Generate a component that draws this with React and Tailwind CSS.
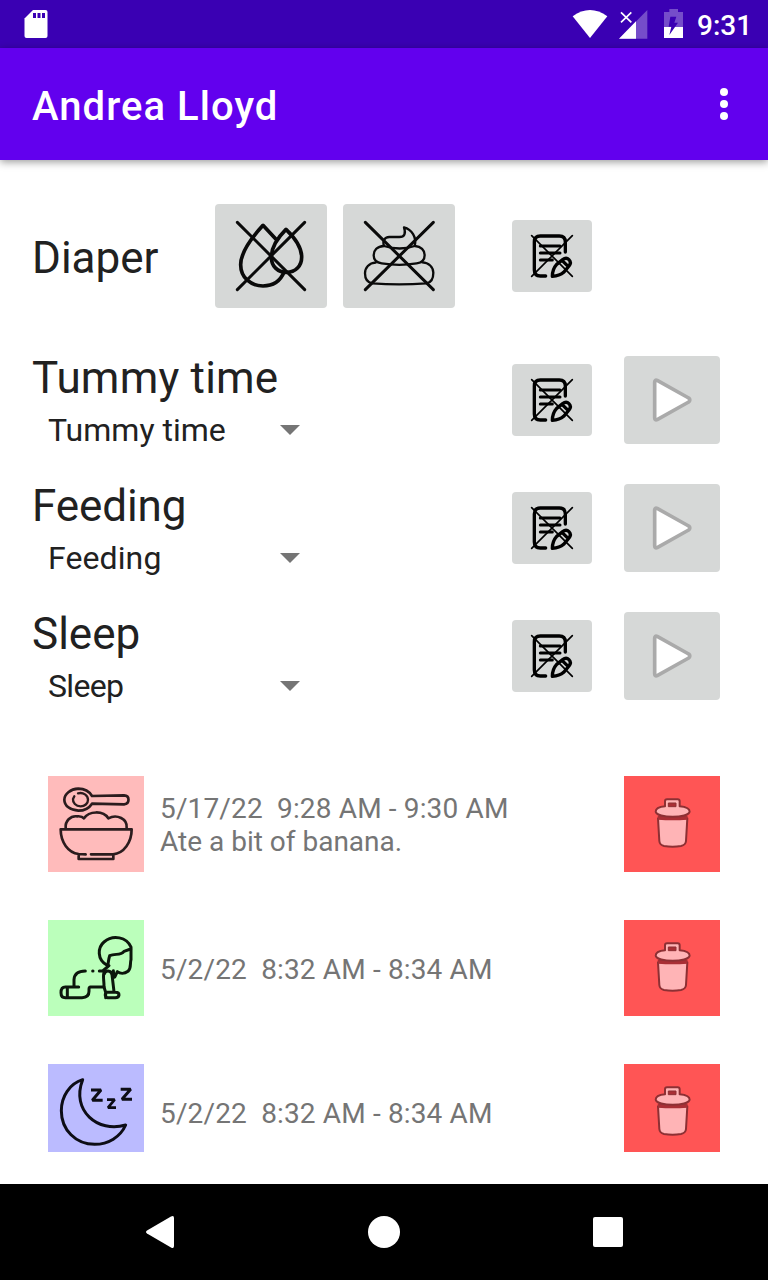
import React from "react";

const ink = { fill: "none", stroke: "#0a0a0a", strokeLinecap: "round", strokeLinejoin: "round" };

function WetIcon() {
  return (
    <svg className="h-full w-full" viewBox="30 27 336 312" {...ink} strokeWidth="11">
      <path d="M213 133L174 91C152 115 107 165 107 209C107 248 138 273 174 273C205 273 226 258 237 232" />
      <path d="M243 103C222 124 199 154 199 186C199 214 218 232 244 232C272 232 290 213 290 186C290 154 267 126 243 103Z" />
      <path strokeWidth="9" d="M97 82L299 284M299 82L97 284" />
    </svg>
  );
}

function SolidIcon() {
  return (
    <svg className="h-full w-full" viewBox="414 27 336 312" {...ink} strokeWidth="7">
      <path d="M537 153C532 137 538 127 553 126H583C599 126 603 115 597 97C620 103 636 127 629 153C602 162 566 162 537 153Z" />
      <path d="M537 153C516 154 506 166 506 181C506 194 515 203 530 205C566 211 600 211 635 205C650 203 659 194 659 180C659 166 648 154 630 153" />
      <path d="M512 203C492 204 480 218 480 235C480 252 488 263 502 265C555 269 610 269 664 265C678 263 685 250 685 233C685 216 671 203 652 202" />
      <path strokeWidth="9" d="M481 82L685 284M685 82L481 284" />
    </svg>
  );
}

function NoteIcon() {
  return (
    <svg className="h-full w-full" viewBox="36 30 240 216" {...ink} stroke="#000" strokeWidth="10">
      <path d="M137 198H121Q103 198 103 180V96Q103 78 121 78H178Q196 78 196 96V126" />
      <path strokeWidth="9" d="M121 108H180M121 129H180M121 150H157" />
      <path d="M157 199C157 183 161 173 170 163L188 149C202 138 218 153 207 168L191 187C182 195 173 198 157 199ZM186 151L205 170" />
      <path strokeWidth="5" d="M95 77L217 199M217 77L95 199" />
    </svg>
  );
}

function PlayIcon() {
  return (
    <svg className="h-full w-full" viewBox="372 18 288 264">
      <path d="M464 97V203Q464 213 473 208L566 156Q573 150 566 144L473 92Q464 87 464 97Z" fill="#fff" stroke="#aaa" strokeWidth="11" strokeLinejoin="round" />
    </svg>
  );
}

function FoodIcon() {
  return (
    <svg className="w-24 h-24" viewBox="24 18 288 288" {...ink} stroke="#2b1c1e" strokeWidth="8">
      <path d="M156 78C147 63 133 56 115 56C91 57 73 72 73 89C73 107 91 121 115 122C133 122 147 115 156 101L252 103C270 101 270 77 252 76L156 78Z" />
      <path strokeWidth="7" d="M114 70C130 66 144 76 144 89C144 101 134 109 122 109C107 109 98 98 99 87L103 79" />
      <path d="M77 174C75 154 91 136 112 139Q126 138 132 145C147 122 190 121 205 145C231 131 263 147 260 174" />
      <path d="M62 178H275C275 216 252 251 219 253H153M62 178C62 216 84 248 116 252L137 253M116 253V267H220V253" />
    </svg>
  );
}

function BabyIcon() {
  return (
    <svg className="w-24 h-24" viewBox="24 18 288 288" {...ink} stroke="#0c160c" strokeWidth="9">
      <path d="M202 154C170 138 173 100 192 84C220 60 260 70 273 99V137C269 150 275 162 264 172C253 180 240 179 232 173L225 188" />
      <path d="M202 158C206 148 204 140 209 125C226 118 242 125 252 112L272 105M220 170L222 190M178 171H188L207 155" />
      <path d="M102 218V197C103 180 115 171 136 171M158 171H159M193 173C187 184 193 202 192 219H151Q147 220 147 226V232Q147 251 126 251H76Q63 251 63 236Q63 219 76 219H116M82 220V250" />
      <path d="M193 180C196 168 213 168 216 182L222 233M192 219L197 235V251M197 235H226Q237 235 237 243Q236 251 226 251H203Q193 250 197 235" />
    </svg>
  );
}

function SleepIcon() {
  return (
    <svg className="w-24 h-24" viewBox="24 18 288 288" {...ink} stroke="#0d0d16" strokeWidth="9">
      <path d="M128 65C89 77 64 115 64 158C64 216 108 259 164 259C205 259 241 237 257 201C174 226 92 158 128 65Z" />
      <path strokeLinecap="butt" strokeLinejoin="bevel" strokeWidth="9" d="M153 96H183L157 127H188M242 94H272L246 124H276" />
      <path strokeLinecap="butt" strokeLinejoin="bevel" strokeWidth="8" d="M201 125H224L204 149H228" />
    </svg>
  );
}

function TrashIcon() {
  return (
    <svg className="w-24 h-24" viewBox="24 18 288 288" fill="#ffb4b6" stroke="#8d3034" strokeWidth="6" strokeLinejoin="round">
      <path d="M126 145L130 213Q131 225 144 228Q170 232 195 228Q209 225 210 213L214 145Z" />
      <path stroke="none" fill="#a92f35" d="M125 137L215 137L213 149Q170 153 127 149Z" />
      <path d="M147 109V94Q147 88 153 88H185Q191 88 191 94V109C211 111 221 117 221 125C218 145 122 145 119 125C119 117 128 111 147 109Z" />
      <rect x="157" y="99" width="23" height="11" fill="#a92f35" stroke="#8d3034" strokeWidth="3" />
    </svg>
  );
}

function StatusIcons() {
  return (
    <svg className="h-12 w-[130px]" viewBox="0 0 390 144" fill="#fff">
      <path d="M38 49Q90 11 142 49L90 114Z" />
      <path opacity=".3" d="M262 30V116H177Z" />
      <path d="M228 64V116H177Z" />
      <path d="M183 37L214 67M214 37L183 67" stroke="#fff" strokeWidth="5" />
      <path opacity=".3" d="M328 27H354V36H369V81H312V36H328Z" />
      <path d="M312 81H369V114H312Z" />
      <path fill="#3a00b3" d="M331 50H349L343 68H354L328 105L334 80H326Z" />
    </svg>
  );
}

function NoteButton() {
  return (
    <button className="h-[72px] w-20 rounded bg-[#d6d8d7]">
      <NoteIcon />
    </button>
  );
}

function TimerRow({ name, titleTracking = "", optionTracking = "" }) {
  return (
    <div className="flex h-32 items-center">
      <div className="h-24 w-[480px]">
        <div className={"h-[52px] text-[44px] leading-[52px] " + titleTracking}>{name}</div>
        <div className="flex h-[52px] w-[268px] items-center justify-between pl-4 text-[32px]">
          <span className={"whitespace-nowrap leading-[52px] " + optionTracking}>{name}</span>
          <svg className="h-[10px] w-5" viewBox="0 0 20 10" fill="#757575">
            <path d="M0 0H20L10 10Z" />
          </svg>
        </div>
      </div>
      <NoteButton />
      <button className="ml-8 h-[88px] w-24 rounded bg-[#d6d8d7]">
        <PlayIcon />
      </button>
    </div>
  );
}

const entries = [
  { Icon: FoodIcon, tile: "bg-[#ffbbbb]", time: "5/17/22  9:28 AM - 9:30 AM", note: "Ate a bit of banana." },
  { Icon: BabyIcon, tile: "bg-[#bbffbb]", time: "5/2/22  8:32 AM - 8:34 AM" },
  { Icon: SleepIcon, tile: "bg-[#bbbbff]", time: "5/2/22  8:32 AM - 8:34 AM" },
];

export default function App() {
  return (
    <div className="flex h-[1280px] w-[768px] flex-col overflow-hidden bg-white font-['Roboto',sans-serif] text-[#212121]">
      <div className="flex h-12 shrink-0 items-center bg-[#3a00b3] text-white">
        <svg className="ml-6 h-12 w-6" viewBox="0 0 24 48">
          <path fill="#fff" d="M9 10H21.5Q23.5 10 23.5 12V36Q23.5 38 21.5 38H2.5Q.5 38 .5 36V18.5Z" />
          <path fill="#3a00b3" d="M9 13h3v5H9zM13.5 13h3v5h-3zM18 13h3v5h-3z" />
        </svg>
        <div className="ml-auto flex w-[208px] items-center">
          <StatusIcons />
          <span className="ml-[7px] pt-[3px] text-[28px] font-medium leading-[45px]">9:31</span>
        </div>
      </div>
      <header className="relative flex h-28 shrink-0 items-center justify-between bg-[#6200ee] pl-8 pr-10 text-white shadow-[0_2px_8px_rgba(0,0,0,0.4)]">
        <h1 className="pt-1.5 text-[40px] font-medium leading-[48px] tracking-[1.05px]">Andrea Lloyd</h1>
        <svg className="h-8 w-2" viewBox="0 0 8 32" fill="#fff">
          <circle cx="4" cy="4" r="4" />
          <circle cx="4" cy="16" r="4" />
          <circle cx="4" cy="28" r="4" />
        </svg>
      </header>
      <main className="h-[1024px] shrink-0 pl-8 pt-4">
        <div className="flex h-40 items-center">
          <div className="w-[183px] pt-1 text-[44px] leading-[52px]">Diaper</div>
          <button className="h-[104px] w-28 rounded bg-[#d6d8d7]">
            <WetIcon />
          </button>
          <button className="ml-4 mr-[57px] h-[104px] w-28 rounded bg-[#d6d8d7]">
            <SolidIcon />
          </button>
          <NoteButton />
        </div>
        <TimerRow name="Tummy time" titleTracking="tracking-[0.2px]" />
        <TimerRow name="Feeding" titleTracking="tracking-[-0.1px]" optionTracking="tracking-[0.1px]" />
        <TimerRow name="Sleep" optionTracking="tracking-[-0.7px]" />
        <div className="mt-8 h-[400px] overflow-hidden pl-4 pt-6">
          {entries.map(({ Icon, tile, time, note }, i) => (
            <div key={i} className="mb-12 flex h-24 w-[672px] items-center">
              <div className={"h-24 w-24 " + tile}>
                <Icon />
              </div>
              <div className="ml-4 grow whitespace-pre pt-0.5 text-[28px] leading-[33px] text-[#757575]">
                <div className="tracking-[0.15px]">{time}</div>
                {note && <div>{note}</div>}
              </div>
              <div className="h-24 w-24 bg-[#ff5555]">
                <TrashIcon />
              </div>
            </div>
          ))}
        </div>
      </main>
      <nav className="flex h-24 shrink-0 items-center bg-black">
        <svg className="h-24 w-full" viewBox="0 0 768 96" fill="#fff">
          <path d="M147 46.5L171 32.5Q174 31 174 34V62Q174 65 171 63.500L147 49.500Q145 48 147 46.500Z" />
          <circle cx="384" cy="48" r="16" />
          <rect x="593" y="33" width="30" height="30" rx="2" />
        </svg>
      </nav>
    </div>
  );
}
